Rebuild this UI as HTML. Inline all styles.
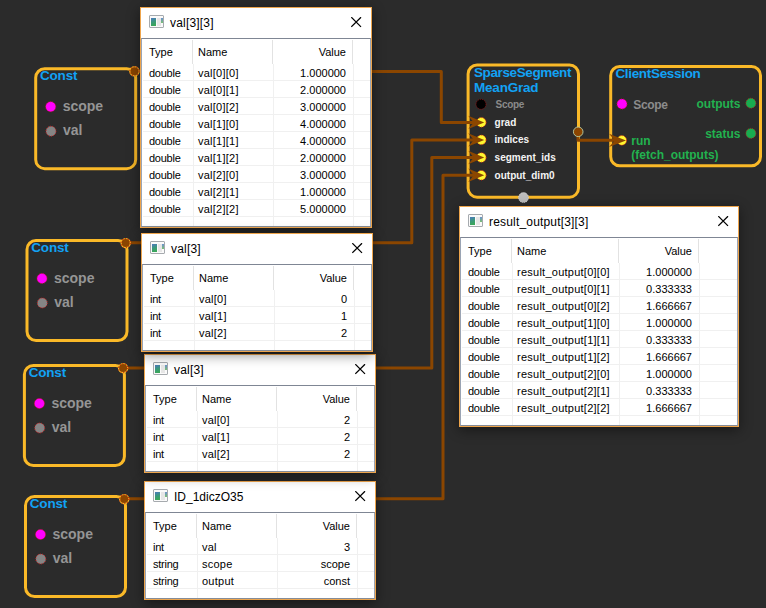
<!DOCTYPE html>
<html><head><meta charset="utf-8"><style>
html,body{margin:0;padding:0;background:#2b2b2b;width:766px;height:608px;overflow:hidden;font-family:"Liberation Sans",sans-serif}
svg.main{position:absolute;left:0;top:0}
.ttl{font:bold 13.5px "Liberation Sans",sans-serif;fill:#12a2f4;letter-spacing:-0.2px}
.cp{font:bold 14px "Liberation Sans",sans-serif;fill:#959595}
.sc10{font:bold 10px "Liberation Sans",sans-serif;fill:#8a8a8a;letter-spacing:-0.3px}
.sc12{font:bold 12px "Liberation Sans",sans-serif;fill:#8c8c8c;letter-spacing:-0.3px}
.wp{font:bold 10px "Liberation Sans",sans-serif;fill:#f4f4f4}
.gr{font:bold 12px "Liberation Sans",sans-serif;fill:#22b24f}
.win{position:absolute;box-sizing:border-box;border:1px solid #eea54c;background:#fff;box-shadow:0 3px 12px rgba(0,0,0,0.45)}
.tb{position:absolute;left:0;top:0;right:0;height:30px;background:#fff}
.ico{position:absolute;left:8px;top:7px;width:13px;height:11px;border:1px solid #a6aaae;border-radius:1px;background:#fafafa}
.ico .a{position:absolute;left:1px;top:2px;width:5px;height:8px;background:linear-gradient(160deg,#4d78c0,#3a9a78 50%,#3aaa50)}
.ico .b{position:absolute;left:7px;top:2px;width:4px;height:8px;background:#e6e6e6}
.ico .c{position:absolute;left:11px;top:2px;width:2px;height:5px;background:linear-gradient(#6a90d0,#7ac070)}
.tt{position:absolute;left:29px;top:8px;font-size:12px;color:#000;white-space:pre}
.cls{position:absolute;right:9px;top:9px}
.tbl{position:absolute;left:0;top:30px;right:0;bottom:0;border:1px solid #9aa4b4;border-top:1px solid #7f8694;border-bottom-color:#858c98;box-sizing:border-box;overflow:hidden;background:#fff}
.hs{position:absolute;top:1px;width:1px;height:24px;background:#e2e2e2}
.ds{position:absolute;width:1px;background:#f0f0f0}
.rs{position:absolute;left:1px;right:0;height:1px;background:#f0f0f0}
.t{position:absolute;font-size:11px;color:#000;white-space:pre;line-height:13px}
.r{text-align:right}
.ty{letter-spacing:-0.25px}
.nm{letter-spacing:0.25px}
</style></head><body>
<svg class="main" width="766" height="608" viewBox="0 0 766 608">
<rect x="35.7" y="68.7" width="100" height="100" rx="9" ry="9" fill="none" stroke="#fab928" stroke-width="3"/>
<text x="40.0" y="80.2" class="ttl">Const</text>
<circle cx="50.7" cy="106.7" r="5" fill="#ff00ff" stroke="#e01030" stroke-width="0.9" stroke-dasharray="1 1.2"/>
<text x="62.7" y="111.2" class="cp">scope</text>
<circle cx="51.0" cy="131.2" r="5" fill="#858585" stroke="#e01818" stroke-width="0.9" stroke-dasharray="1 1.2"/>
<text x="63.0" y="135.2" class="cp">val</text>
<rect x="27.0" y="240.5" width="100" height="100" rx="9" ry="9" fill="none" stroke="#fab928" stroke-width="3"/>
<text x="31.3" y="252" class="ttl">Const</text>
<circle cx="42.0" cy="278.5" r="5" fill="#ff00ff" stroke="#e01030" stroke-width="0.9" stroke-dasharray="1 1.2"/>
<text x="54.0" y="283" class="cp">scope</text>
<circle cx="42.3" cy="303" r="5" fill="#858585" stroke="#e01818" stroke-width="0.9" stroke-dasharray="1 1.2"/>
<text x="54.3" y="307" class="cp">val</text>
<rect x="24.4" y="365.5" width="100" height="100" rx="9" ry="9" fill="none" stroke="#fab928" stroke-width="3"/>
<text x="28.7" y="377" class="ttl">Const</text>
<circle cx="39.4" cy="403.5" r="5" fill="#ff00ff" stroke="#e01030" stroke-width="0.9" stroke-dasharray="1 1.2"/>
<text x="51.4" y="408" class="cp">scope</text>
<circle cx="39.7" cy="428" r="5" fill="#858585" stroke="#e01818" stroke-width="0.9" stroke-dasharray="1 1.2"/>
<text x="51.7" y="432" class="cp">val</text>
<rect x="25.5" y="496.5" width="100" height="100" rx="9" ry="9" fill="none" stroke="#fab928" stroke-width="3"/>
<text x="29.8" y="508" class="ttl">Const</text>
<circle cx="40.5" cy="534.5" r="5" fill="#ff00ff" stroke="#e01030" stroke-width="0.9" stroke-dasharray="1 1.2"/>
<text x="52.5" y="539" class="cp">scope</text>
<circle cx="40.8" cy="559" r="5" fill="#858585" stroke="#e01818" stroke-width="0.9" stroke-dasharray="1 1.2"/>
<text x="52.8" y="563" class="cp">val</text>
<rect x="468.1" y="65.0" width="110.4" height="132.2" rx="9" ry="9" fill="none" stroke="#fab928" stroke-width="3"/>
<text x="474" y="76.9" class="ttl" style="letter-spacing:-0.38px">SparseSegment</text><text x="474" y="91.6" class="ttl">MeanGrad</text>
<circle cx="481" cy="104.3" r="5" fill="#000" stroke="#a01010" stroke-width="0.8" stroke-dasharray="1 1"/>
<text x="495.6" y="108" class="sc10">Scope</text>
<rect x="610.7" y="66.5" width="149.8" height="99.3" rx="9" ry="9" fill="none" stroke="#fab928" stroke-width="3"/>
<text x="615.4" y="77.7" class="ttl" style="letter-spacing:-0.32px">ClientSession</text>
<circle cx="622" cy="104" r="5" fill="#ff00ff" stroke="#e01030" stroke-width="0.9" stroke-dasharray="1 1.2"/>
<text x="633.2" y="108.8" class="sc12">Scope</text>
<text x="740.5" y="107.7" class="gr" text-anchor="end">outputs</text>
<text x="740.5" y="137.7" class="gr" text-anchor="end">status</text>
<circle cx="750.9" cy="103.2" r="5" fill="#18ad50" stroke="#c02818" stroke-width="0.9" stroke-dasharray="1 1.2"/>
<circle cx="750.9" cy="133.4" r="5" fill="#18ad50" stroke="#c02818" stroke-width="0.9" stroke-dasharray="1 1.2"/>
<text x="631.3" y="144.5" class="gr">run</text><text x="631.3" y="158.5" class="gr">(fetch_outputs)</text>
<path d="M134.4 71.4 L441.3 71.4 L441.3 122.4 L478 122.4" fill="none" stroke="#8b4600" stroke-width="3" stroke-linejoin="round"/>
<path d="M125.6 242.8 L411.8 242.8 L411.8 139.9 L478 139.9" fill="none" stroke="#8b4600" stroke-width="3" stroke-linejoin="round"/>
<path d="M122.6 368.0 L431.8 368.0 L431.8 157.5 L478 157.5" fill="none" stroke="#8b4600" stroke-width="3" stroke-linejoin="round"/>
<path d="M123.6 498.8 L443.0 498.8 L443.0 175.3 L478 175.3" fill="none" stroke="#8b4600" stroke-width="3" stroke-linejoin="round"/>
<path d="M578 132 L578 140.3 L618 140.3" fill="none" stroke="#8b4600" stroke-width="3" stroke-linejoin="round"/>
<circle cx="481.3" cy="122.4" r="4.8" fill="#fff830" stroke="#e02010" stroke-width="1" stroke-dasharray="1 1.2"/>
<path d="M484.2 122.4 L468.2 115.7 L473.8 122.4 L468.2 129.1 Z" fill="#8b4600"/>
<text x="494.6" y="126.2" class="wp">grad</text>
<circle cx="481.3" cy="139.9" r="4.8" fill="#fff830" stroke="#e02010" stroke-width="1" stroke-dasharray="1 1.2"/>
<path d="M484.2 139.9 L468.2 133.20000000000002 L473.8 139.9 L468.2 146.6 Z" fill="#8b4600"/>
<text x="494.6" y="143.3" class="wp">indices</text>
<circle cx="481.3" cy="157.5" r="4.8" fill="#fff830" stroke="#e02010" stroke-width="1" stroke-dasharray="1 1.2"/>
<path d="M484.2 157.5 L468.2 150.8 L473.8 157.5 L468.2 164.2 Z" fill="#8b4600"/>
<text x="494.6" y="160.8" class="wp">segment_ids</text>
<circle cx="481.3" cy="175.3" r="4.8" fill="#fff830" stroke="#e02010" stroke-width="1" stroke-dasharray="1 1.2"/>
<path d="M484.2 175.3 L468.2 168.60000000000002 L473.8 175.3 L468.2 182.0 Z" fill="#8b4600"/>
<text x="494.6" y="178.6" class="wp">output_dim0</text>
<circle cx="621.8" cy="140.4" r="4.8" fill="#fff830" stroke="#e02010" stroke-width="1" stroke-dasharray="1 1.2"/>
<path d="M626 140.4 L609 133.70000000000002 L614.95 140.4 L609 147.1 Z" fill="#8b4600"/>
<circle cx="134.4" cy="71.3" r="4.6" fill="#8b4500" stroke="#f2c22a" stroke-width="1.2"/><circle cx="134.4" cy="71.3" r="4.6" fill="none" stroke="#d02808" stroke-width="1.2" stroke-dasharray="1.1 1.8"/>
<circle cx="125.7" cy="243.1" r="4.6" fill="#8b4500" stroke="#f2c22a" stroke-width="1.2"/><circle cx="125.7" cy="243.1" r="4.6" fill="none" stroke="#d02808" stroke-width="1.2" stroke-dasharray="1.1 1.8"/>
<circle cx="123.1" cy="368.1" r="4.6" fill="#8b4500" stroke="#f2c22a" stroke-width="1.2"/><circle cx="123.1" cy="368.1" r="4.6" fill="none" stroke="#d02808" stroke-width="1.2" stroke-dasharray="1.1 1.8"/>
<circle cx="124.2" cy="499.1" r="4.6" fill="#8b4500" stroke="#f2c22a" stroke-width="1.2"/><circle cx="124.2" cy="499.1" r="4.6" fill="none" stroke="#d02808" stroke-width="1.2" stroke-dasharray="1.1 1.8"/>
<circle cx="578.2" cy="131.8" r="4.8" fill="#8b4500" stroke="#b8d0a8" stroke-width="0.9"/>
<circle cx="523.5" cy="197.6" r="5" fill="#bdbdbd" stroke="#d8d8d8" stroke-width="0.8" stroke-dasharray="1 1"/>
</svg>
<div class="win" style="left:140px;top:7px;width:232px;height:221px;z-index:2">
<div class="tb"><div class="ico"><i class="a"></i><i class="b"></i><i class="c"></i></div><span class="tt" style="letter-spacing:0.18px">val[3][3]</span><svg class="cls" width="11" height="11" viewBox="0 0 11 11"><path d="M0.3 0.2L10 9.9M10 0.2L0.3 9.9" stroke="#000" stroke-width="1.25"/></svg></div>
<div class="tbl">
<div class="hs" style="left:50px"></div><div class="hs" style="left:130px"></div><div class="hs" style="left:210px"></div>
<span class="t" style="left:7px;top:7px">Type</span><span class="t" style="left:56px;top:7px">Name</span><span class="t r" style="left:130px;width:74px;top:7px">Value</span>
<div class="rs" style="top:41px"></div>
<span class="t ty" style="left:7px;top:28px">double</span><span class="t nm" style="left:56px;top:28px">val[0][0]</span><span class="t r" style="left:130px;width:74px;top:28px">1.000000</span>
<div class="rs" style="top:58px"></div>
<span class="t ty" style="left:7px;top:45px">double</span><span class="t nm" style="left:56px;top:45px">val[0][1]</span><span class="t r" style="left:130px;width:74px;top:45px">2.000000</span>
<div class="rs" style="top:75px"></div>
<span class="t ty" style="left:7px;top:62px">double</span><span class="t nm" style="left:56px;top:62px">val[0][2]</span><span class="t r" style="left:130px;width:74px;top:62px">3.000000</span>
<div class="rs" style="top:92px"></div>
<span class="t ty" style="left:7px;top:79px">double</span><span class="t nm" style="left:56px;top:79px">val[1][0]</span><span class="t r" style="left:130px;width:74px;top:79px">4.000000</span>
<div class="rs" style="top:109px"></div>
<span class="t ty" style="left:7px;top:96px">double</span><span class="t nm" style="left:56px;top:96px">val[1][1]</span><span class="t r" style="left:130px;width:74px;top:96px">4.000000</span>
<div class="rs" style="top:126px"></div>
<span class="t ty" style="left:7px;top:113px">double</span><span class="t nm" style="left:56px;top:113px">val[1][2]</span><span class="t r" style="left:130px;width:74px;top:113px">2.000000</span>
<div class="rs" style="top:143px"></div>
<span class="t ty" style="left:7px;top:130px">double</span><span class="t nm" style="left:56px;top:130px">val[2][0]</span><span class="t r" style="left:130px;width:74px;top:130px">3.000000</span>
<div class="rs" style="top:160px"></div>
<span class="t ty" style="left:7px;top:147px">double</span><span class="t nm" style="left:56px;top:147px">val[2][1]</span><span class="t r" style="left:130px;width:74px;top:147px">1.000000</span>
<div class="rs" style="top:177px"></div>
<span class="t ty" style="left:7px;top:164px">double</span><span class="t nm" style="left:56px;top:164px">val[2][2]</span><span class="t r" style="left:130px;width:74px;top:164px">5.000000</span>
<div class="ds" style="left:51px;top:25px;height:163px"></div><div class="ds" style="left:131px;top:25px;height:163px"></div><div class="ds" style="left:211px;top:25px;height:163px"></div>
</div></div>
<div class="win" style="left:141px;top:233px;width:232px;height:119px;z-index:5">
<div class="tb"><div class="ico"><i class="a"></i><i class="b"></i><i class="c"></i></div><span class="tt" style="letter-spacing:0.18px">val[3]</span><svg class="cls" width="11" height="11" viewBox="0 0 11 11"><path d="M0.3 0.2L10 9.9M10 0.2L0.3 9.9" stroke="#000" stroke-width="1.25"/></svg></div>
<div class="tbl">
<div class="hs" style="left:50px"></div><div class="hs" style="left:130px"></div><div class="hs" style="left:210px"></div>
<span class="t" style="left:7px;top:7px">Type</span><span class="t" style="left:56px;top:7px">Name</span><span class="t r" style="left:130px;width:74px;top:7px">Value</span>
<div class="rs" style="top:41px"></div>
<span class="t ty" style="left:7px;top:28px">int</span><span class="t nm" style="left:56px;top:28px">val[0]</span><span class="t r" style="left:130px;width:74px;top:28px">0</span>
<div class="rs" style="top:58px"></div>
<span class="t ty" style="left:7px;top:45px">int</span><span class="t nm" style="left:56px;top:45px">val[1]</span><span class="t r" style="left:130px;width:74px;top:45px">1</span>
<div class="rs" style="top:75px"></div>
<span class="t ty" style="left:7px;top:62px">int</span><span class="t nm" style="left:56px;top:62px">val[2]</span><span class="t r" style="left:130px;width:74px;top:62px">2</span>
<div class="ds" style="left:51px;top:25px;height:61px"></div><div class="ds" style="left:131px;top:25px;height:61px"></div><div class="ds" style="left:211px;top:25px;height:61px"></div>
</div></div>
<div class="win" style="left:144px;top:354px;width:232px;height:119px;z-index:4">
<div class="tb"><div class="ico"><i class="a"></i><i class="b"></i><i class="c"></i></div><span class="tt" style="letter-spacing:0.18px">val[3]</span><svg class="cls" width="11" height="11" viewBox="0 0 11 11"><path d="M0.3 0.2L10 9.9M10 0.2L0.3 9.9" stroke="#000" stroke-width="1.25"/></svg></div>
<div class="tbl">
<div class="hs" style="left:50px"></div><div class="hs" style="left:130px"></div><div class="hs" style="left:210px"></div>
<span class="t" style="left:7px;top:7px">Type</span><span class="t" style="left:56px;top:7px">Name</span><span class="t r" style="left:130px;width:74px;top:7px">Value</span>
<div class="rs" style="top:41px"></div>
<span class="t ty" style="left:7px;top:28px">int</span><span class="t nm" style="left:56px;top:28px">val[0]</span><span class="t r" style="left:130px;width:74px;top:28px">2</span>
<div class="rs" style="top:58px"></div>
<span class="t ty" style="left:7px;top:45px">int</span><span class="t nm" style="left:56px;top:45px">val[1]</span><span class="t r" style="left:130px;width:74px;top:45px">2</span>
<div class="rs" style="top:75px"></div>
<span class="t ty" style="left:7px;top:62px">int</span><span class="t nm" style="left:56px;top:62px">val[2]</span><span class="t r" style="left:130px;width:74px;top:62px">2</span>
<div class="ds" style="left:51px;top:25px;height:61px"></div><div class="ds" style="left:131px;top:25px;height:61px"></div><div class="ds" style="left:211px;top:25px;height:61px"></div>
</div></div>
<div class="win" style="left:144px;top:481px;width:232px;height:119px;z-index:3">
<div class="tb"><div class="ico"><i class="a"></i><i class="b"></i><i class="c"></i></div><span class="tt" style="letter-spacing:0">ID_1diczO35</span><svg class="cls" width="11" height="11" viewBox="0 0 11 11"><path d="M0.3 0.2L10 9.9M10 0.2L0.3 9.9" stroke="#000" stroke-width="1.25"/></svg></div>
<div class="tbl">
<div class="hs" style="left:50px"></div><div class="hs" style="left:130px"></div><div class="hs" style="left:210px"></div>
<span class="t" style="left:7px;top:7px">Type</span><span class="t" style="left:56px;top:7px">Name</span><span class="t r" style="left:130px;width:74px;top:7px">Value</span>
<div class="rs" style="top:41px"></div>
<span class="t ty" style="left:7px;top:28px">int</span><span class="t nm" style="left:56px;top:28px">val</span><span class="t r" style="left:130px;width:74px;top:28px">3</span>
<div class="rs" style="top:58px"></div>
<span class="t ty" style="left:7px;top:45px">string</span><span class="t nm" style="left:56px;top:45px">scope</span><span class="t r" style="left:130px;width:74px;top:45px">scope</span>
<div class="rs" style="top:75px"></div>
<span class="t ty" style="left:7px;top:62px">string</span><span class="t nm" style="left:56px;top:62px">output</span><span class="t r" style="left:130px;width:74px;top:62px">const</span>
<div class="ds" style="left:51px;top:25px;height:61px"></div><div class="ds" style="left:131px;top:25px;height:61px"></div><div class="ds" style="left:211px;top:25px;height:61px"></div>
</div></div>
<div class="win" style="left:459px;top:206px;width:280px;height:221px;z-index:6">
<div class="tb"><div class="ico"><i class="a"></i><i class="b"></i><i class="c"></i></div><span class="tt" style="letter-spacing:0.18px">result_output[3][3]</span><svg class="cls" width="11" height="11" viewBox="0 0 11 11"><path d="M0.3 0.2L10 9.9M10 0.2L0.3 9.9" stroke="#000" stroke-width="1.25"/></svg></div>
<div class="tbl">
<div class="hs" style="left:50px"></div><div class="hs" style="left:157px"></div><div class="hs" style="left:237px"></div>
<span class="t" style="left:7px;top:7px">Type</span><span class="t" style="left:56px;top:7px">Name</span><span class="t r" style="left:157px;width:74px;top:7px">Value</span>
<div class="rs" style="top:41px"></div>
<span class="t ty" style="left:7px;top:28px">double</span><span class="t nm" style="left:56px;top:28px">result_output[0][0]</span><span class="t r" style="left:157px;width:74px;top:28px">1.000000</span>
<div class="rs" style="top:58px"></div>
<span class="t ty" style="left:7px;top:45px">double</span><span class="t nm" style="left:56px;top:45px">result_output[0][1]</span><span class="t r" style="left:157px;width:74px;top:45px">0.333333</span>
<div class="rs" style="top:75px"></div>
<span class="t ty" style="left:7px;top:62px">double</span><span class="t nm" style="left:56px;top:62px">result_output[0][2]</span><span class="t r" style="left:157px;width:74px;top:62px">1.666667</span>
<div class="rs" style="top:92px"></div>
<span class="t ty" style="left:7px;top:79px">double</span><span class="t nm" style="left:56px;top:79px">result_output[1][0]</span><span class="t r" style="left:157px;width:74px;top:79px">1.000000</span>
<div class="rs" style="top:109px"></div>
<span class="t ty" style="left:7px;top:96px">double</span><span class="t nm" style="left:56px;top:96px">result_output[1][1]</span><span class="t r" style="left:157px;width:74px;top:96px">0.333333</span>
<div class="rs" style="top:126px"></div>
<span class="t ty" style="left:7px;top:113px">double</span><span class="t nm" style="left:56px;top:113px">result_output[1][2]</span><span class="t r" style="left:157px;width:74px;top:113px">1.666667</span>
<div class="rs" style="top:143px"></div>
<span class="t ty" style="left:7px;top:130px">double</span><span class="t nm" style="left:56px;top:130px">result_output[2][0]</span><span class="t r" style="left:157px;width:74px;top:130px">1.000000</span>
<div class="rs" style="top:160px"></div>
<span class="t ty" style="left:7px;top:147px">double</span><span class="t nm" style="left:56px;top:147px">result_output[2][1]</span><span class="t r" style="left:157px;width:74px;top:147px">0.333333</span>
<div class="rs" style="top:177px"></div>
<span class="t ty" style="left:7px;top:164px">double</span><span class="t nm" style="left:56px;top:164px">result_output[2][2]</span><span class="t r" style="left:157px;width:74px;top:164px">1.666667</span>
<div class="ds" style="left:51px;top:25px;height:163px"></div><div class="ds" style="left:158px;top:25px;height:163px"></div><div class="ds" style="left:238px;top:25px;height:163px"></div>
</div></div>
</body></html>
